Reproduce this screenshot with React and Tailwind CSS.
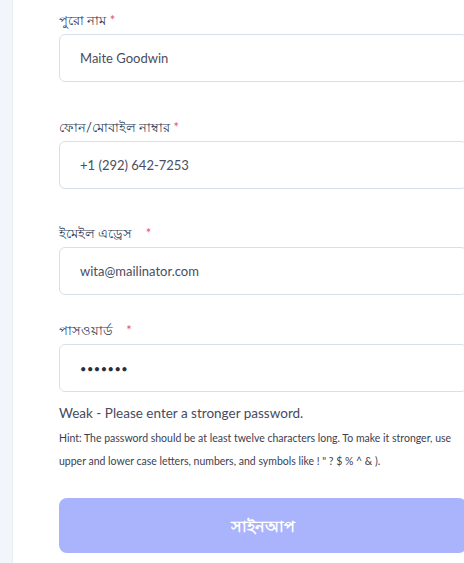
import React from 'react';

const fields = [
  { label: 'পুরো নাম', gap: '', value: 'Maite Goodwin', mb: 'mb-[35px]' },
  { label: 'ফোন/মোবাইল নাম্বার', gap: '', value: '+1 (292) 642-7253', mb: 'mb-[34px]' },
  { label: 'ইমেইল এড্রেস', gap: '\u00a0\u00a0\u00a0', value: 'wita@mailinator.com', mb: 'mb-[25px]' },
  { label: 'পাসওয়ার্ড', gap: '\u00a0\u00a0\u00a0', value: '•••••••', mb: '', dots: true },
];

const Field = ({ label, gap, value, mb, dots }) => (
  <div className={mb}>
    <label className="block h-5 mb-1 text-[13px] leading-[20px] text-[#2f3a56] whitespace-nowrap">
      {label}
      {gap} <span className="text-[#e2536e]">*</span>
    </label>
    <input
      type="text"
      value={value}
      readOnly
      className={`block w-full h-12 px-5 rounded-md border border-[#d6e0ec] bg-white outline-none ${
        dots ? 'text-[11px] tracking-[0.5px] text-[#2a2d3a]' : 'text-[13px] text-[#4a4d5e]'
      }`}
    />
  </div>
);

export default function App() {
  return (
    <div className="flex min-h-[563px] bg-white overflow-hidden font-['Lato','Noto_Sans',sans-serif]">
      <div className="w-[13px] shrink-0 bg-[#f2f5f9] border-r border-[#e9eef4]" />
      <div className="pl-[46px] pt-[10px] shrink-0">
        <form className="w-[408px]">
          {fields.map((f) => (
            <Field key={f.label} {...f} />
          ))}
          <p className="mt-[11px] h-5 text-[13.5px] leading-[20px] text-[#474a5c]">
            Weak - Please enter a stronger password.
          </p>
          <p className="mt-[4px] text-[10.5px] leading-[23px] text-[#3d4050]">
            Hint: The password should be at least twelve characters long. To make it stronger, use upper and lower case letters, numbers, and symbols like ! " ? $ % ^ &amp; ).
          </p>
          <button
            type="button"
            className="block mt-[25px] w-full h-[55px] rounded-lg bg-[#aab4fc] text-white text-[16px] font-semibold"
          >
            সাইনআপ
          </button>
        </form>
      </div>
    </div>
  );
}
